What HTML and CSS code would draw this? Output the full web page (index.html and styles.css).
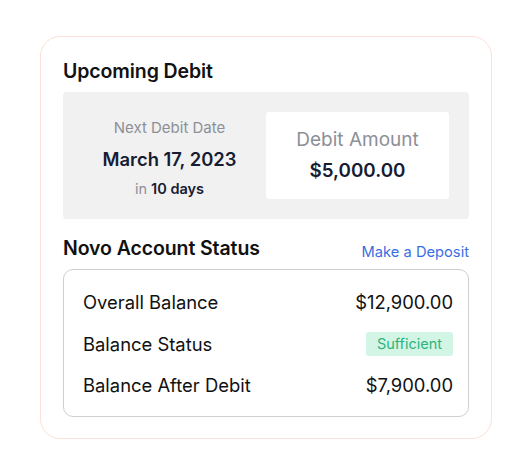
FILE: index.html
```html
<!DOCTYPE html>
<html>
<head>
<meta charset="utf-8">
<link rel="stylesheet" href="styles.css">
</head>
<body>
<div class="card">
  <h2 class="title">Upcoming Debit</h2>
  <div class="debit">
    <div class="date-col">
      <div class="label">Next Debit Date</div>
      <div class="date">March 17, 2023</div>
      <div class="in">in <b>10 days</b></div>
    </div>
    <div class="amount-box">
      <div class="amount-label">Debit Amount</div>
      <div class="amount">$5,000.00</div>
    </div>
  </div>
  <div class="status-head">
    <h2 class="title">Novo Account Status</h2>
    <a class="link">Make a Deposit</a>
  </div>
  <div class="status">
    <div class="row"><span>Overall Balance</span><span>$12,900.00</span></div>
    <div class="row"><span>Balance Status</span><span class="badge">Sufficient</span></div>
    <div class="row"><span>Balance After Debit</span><span>$7,900.00</span></div>
  </div>
</div>
</body>
</html>
```
FILE: styles.css
```css
* { box-sizing: border-box; }
body {
  margin: 0;
  padding: 36px 26px 0 40px;
  background: #fff;
  font-family: "Inter", "Noto Sans", sans-serif;
  color: #111;
}
.card {
  width: 452px;
  height: 403px;
  border: 1px solid #fde0d6;
  border-radius: 20px;
  padding: 22px 22px 0 22px;
}
.title {
  margin: 0;
  font-size: 19.5px;
  font-weight: 600;
  color: #111;
  line-height: 24px;
  letter-spacing: -0.1px;
}
.debit {
  margin-top: 9px;
  background: #f1f1f1;
  border-radius: 4px;
  padding: 20px;
  display: grid;
  grid-template-columns: 1fr 183px;
  gap: 10px;
  height: 127px;
}
.date-col {
  display: flex;
  flex-direction: column;
  align-items: center;
  justify-content: center;
  text-align: center;
  padding-top: 6px;
}
.label {
  font-size: 15px;
  color: #8d8f97;
  line-height: 18px;
}
.date {
  margin-top: 10px;
  font-size: 18.4px;
  font-weight: 600;
  color: #171c33;
  line-height: 24px;
}
.in {
  margin-top: 9px;
  font-size: 14.5px;
  color: #8d8f97;
  line-height: 18px;
}
.in b { color: #171c33; font-weight: 600; }
.amount-box {
  background: #fff;
  border-radius: 3px;
  display: flex;
  flex-direction: column;
  align-items: center;
  justify-content: center;
}
.amount-label {
  font-size: 19px;
  color: #8d8f97;
  line-height: 22px;
}
.amount {
  margin-top: 8px;
  font-size: 18.8px;
  font-weight: 600;
  color: #171c33;
  line-height: 24px;
}
.status-head {
  margin-top: 17px;
  display: flex;
  justify-content: space-between;
  align-items: flex-end;
}
.link {
  font-size: 14.7px;
  color: #3a6fe2;
  line-height: 16px;
}
.status {
  margin-top: 9px;
  border: 1px solid #cfcfd2;
  border-radius: 10px;
  padding: 20px 15px 19px 19px;
  height: 148px;
  display: flex;
  flex-direction: column;
  justify-content: space-between;
}
.row {
  display: flex;
  justify-content: space-between;
  align-items: center;
  font-size: 18.4px;
  line-height: 24px;
  color: #111;
}
.badge {
  background: #d3f5e6;
  color: #2db47c;
  font-size: 14.5px;
  border-radius: 3px;
  padding: 3px 11px;
  line-height: 18px;
}
```
